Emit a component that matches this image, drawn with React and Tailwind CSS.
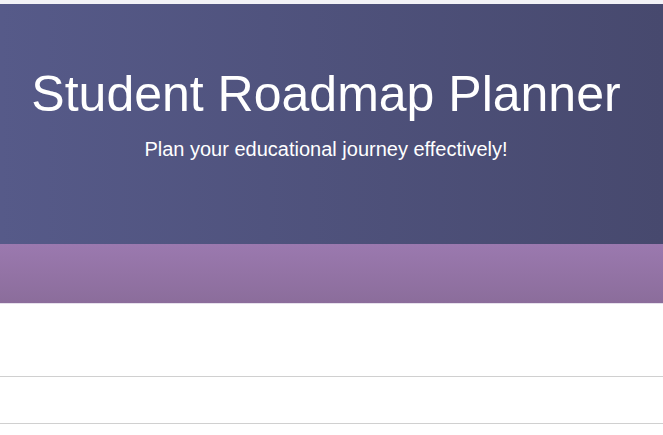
export default function App() {
  return (
    <div className="w-[663px] h-[435px] overflow-hidden bg-white" style={{ fontFamily: '"Liberation Sans", Arial, sans-serif' }}>
      <div className="h-[4px] bg-[#f2f2f6]" />
      <header className="h-[240px] bg-gradient-to-r from-[#565a89] to-[#47496e] pt-[62px] pr-[11px] text-center text-white">
        <h1 className="text-[50px] leading-[57px] font-normal">Student Roadmap Planner</h1>
        <p className="mt-[11px] text-[20px] leading-[30px]">Plan your educational journey effectively!</p>
      </header>
      <nav className="h-[60px] bg-gradient-to-b from-[#9b79af] to-[#8b6d9b] border-b border-[#e6e0ec]" />
      <section className="h-[73px] border-b border-[#d0d0d0]" />
      <section className="h-[47px] border-b border-[#d0d0d0]" />
    </div>
  );
}
